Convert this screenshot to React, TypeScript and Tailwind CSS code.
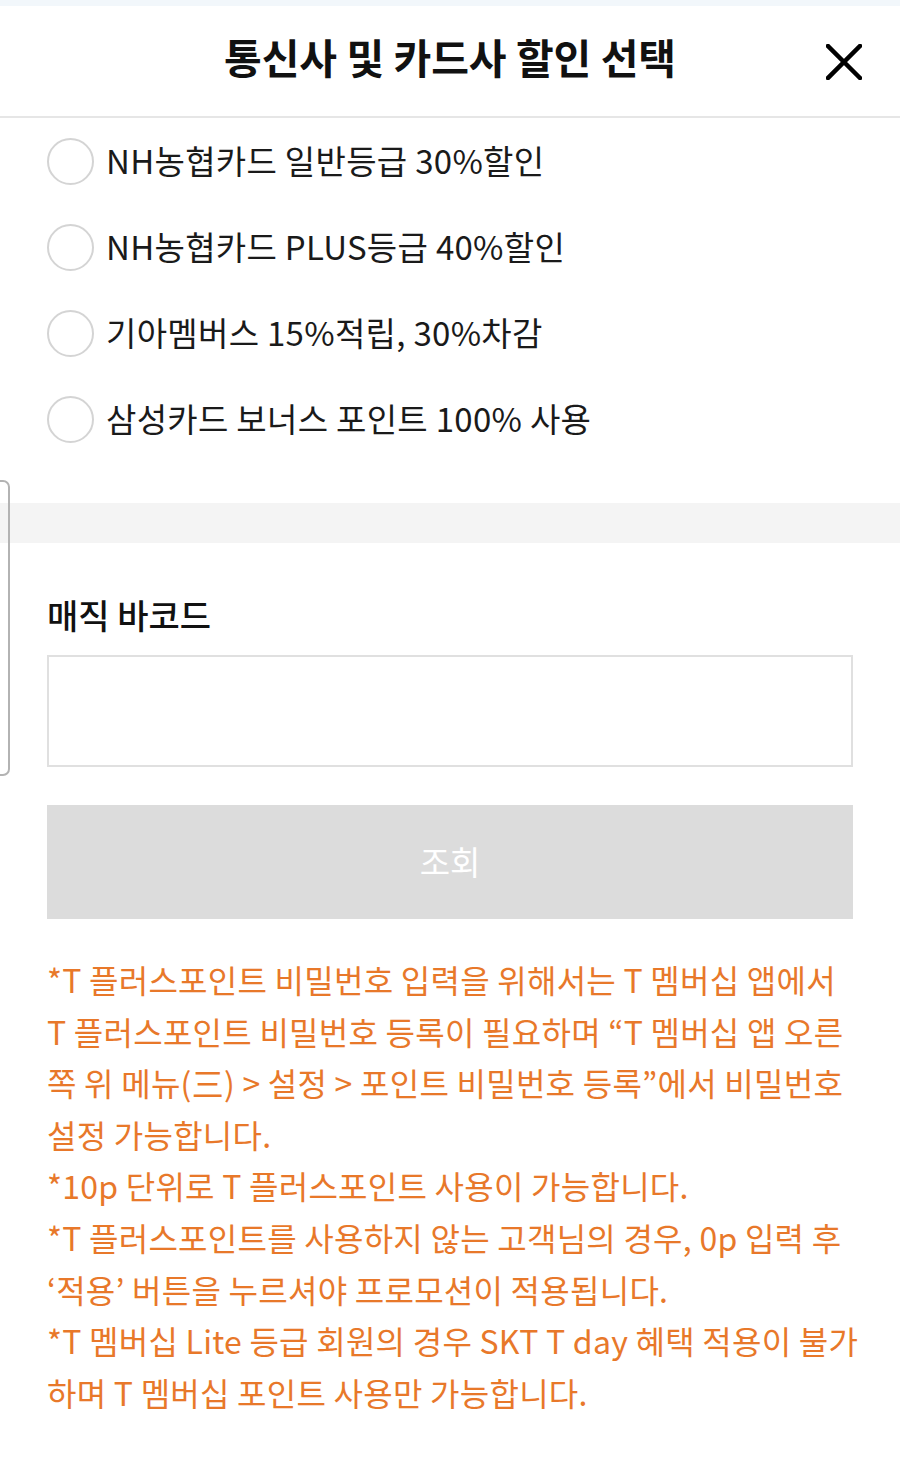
import React from "react";

const options = [
  "NH농협카드 일반등급 30%할인",
  "NH농협카드 PLUS등급 40%할인",
  "기아멤버스 15%적립, 30%차감",
  "삼성카드 보너스 포인트 100% 사용",
];

const notes = [
  "*T 플러스포인트 비밀번호 입력을 위해서는 T 멤버십 앱에서",
  "T 플러스포인트 비밀번호 등록이 필요하며 “T 멤버십 앱 오른",
  "쪽 위 메뉴(三) > 설정 > 포인트 비밀번호 등록”에서 비밀번호",
  "설정 가능합니다.",
  "*10p 단위로 T 플러스포인트 사용이 가능합니다.",
  "*T 플러스포인트를 사용하지 않는 고객님의 경우, 0p 입력 후",
  "‘적용’ 버튼을 누르셔야 프로모션이 적용됩니다.",
  "*T 멤버십 Lite 등급 회원의 경우 SKT T day 혜택 적용이 불가",
  "하며 T 멤버십 포인트 사용만 가능합니다.",
];

const App: React.FC = () => {
  return (
    <div
      className="relative min-h-[1472px] w-[900px] bg-white overflow-hidden"
      style={{ fontFamily: '"Noto Sans CJK KR", "Noto Sans", sans-serif' }}
    >
      <div className="h-[6px] bg-[#f2f7fb]" />

      {/* header */}
      <div className="relative h-[112px] border-b-2 border-[#e6e6e6] flex items-center justify-center">
        <h1 className="text-[41px] font-bold text-[#111] leading-none mt-[-10px]">
          통신사 및 카드사 할인 선택
        </h1>
        <button className="absolute right-[38px] top-[38px] w-[36px] h-[36px]">
          <svg viewBox="0 0 36 36" className="w-[36px] h-[36px]">
            <path d="M2 2 L34 34 M34 2 L2 34" stroke="#000" strokeWidth="4.5" strokeLinecap="square" />
          </svg>
        </button>
      </div>

      {/* options */}
      <div className="pb-[41px]">
        {options.map((label, i) => (
          <label key={i} className="h-[86px] flex items-center pl-[47px] cursor-pointer">
            <span className="w-[47px] h-[47px] rounded-full border-2 border-[#d4d4d4] shrink-0" />
            <span className="ml-[12px] text-[33px] text-[#1a1a1a] tracking-[0.3px] leading-none mt-[-2px]">
              {label}
            </span>
          </label>
        ))}
      </div>

      <div className="h-[40px] bg-[#f4f4f4]" />

      {/* magic barcode */}
      <div className="px-[47px] pt-[52px]">
        <div className="text-[34px] font-medium text-[#111] leading-[40px]">매직 바코드</div>
        <input className="mt-[20px] block w-full h-[112px] border-2 border-[#e0e0e0] outline-none" />
        <button className="mt-[38px] w-full h-[114px] bg-[#dcdcdc] text-white text-[33px] flex items-center justify-center">
          조회
        </button>

        <div className="mt-[35px] text-[32px] text-[#e8782a] leading-[51.6px] tracking-[0.25px]">
          {notes.map((line, i) => (
            <div key={i} className="whitespace-nowrap">
              {line}
            </div>
          ))}
        </div>
      </div>

      {/* side handle overlay */}
      <div className="absolute left-[-6px] top-[480px] w-[16px] h-[296px] border-2 border-[#b3b3b3] rounded-[7px]" />
    </div>
  );
};

export default App;
